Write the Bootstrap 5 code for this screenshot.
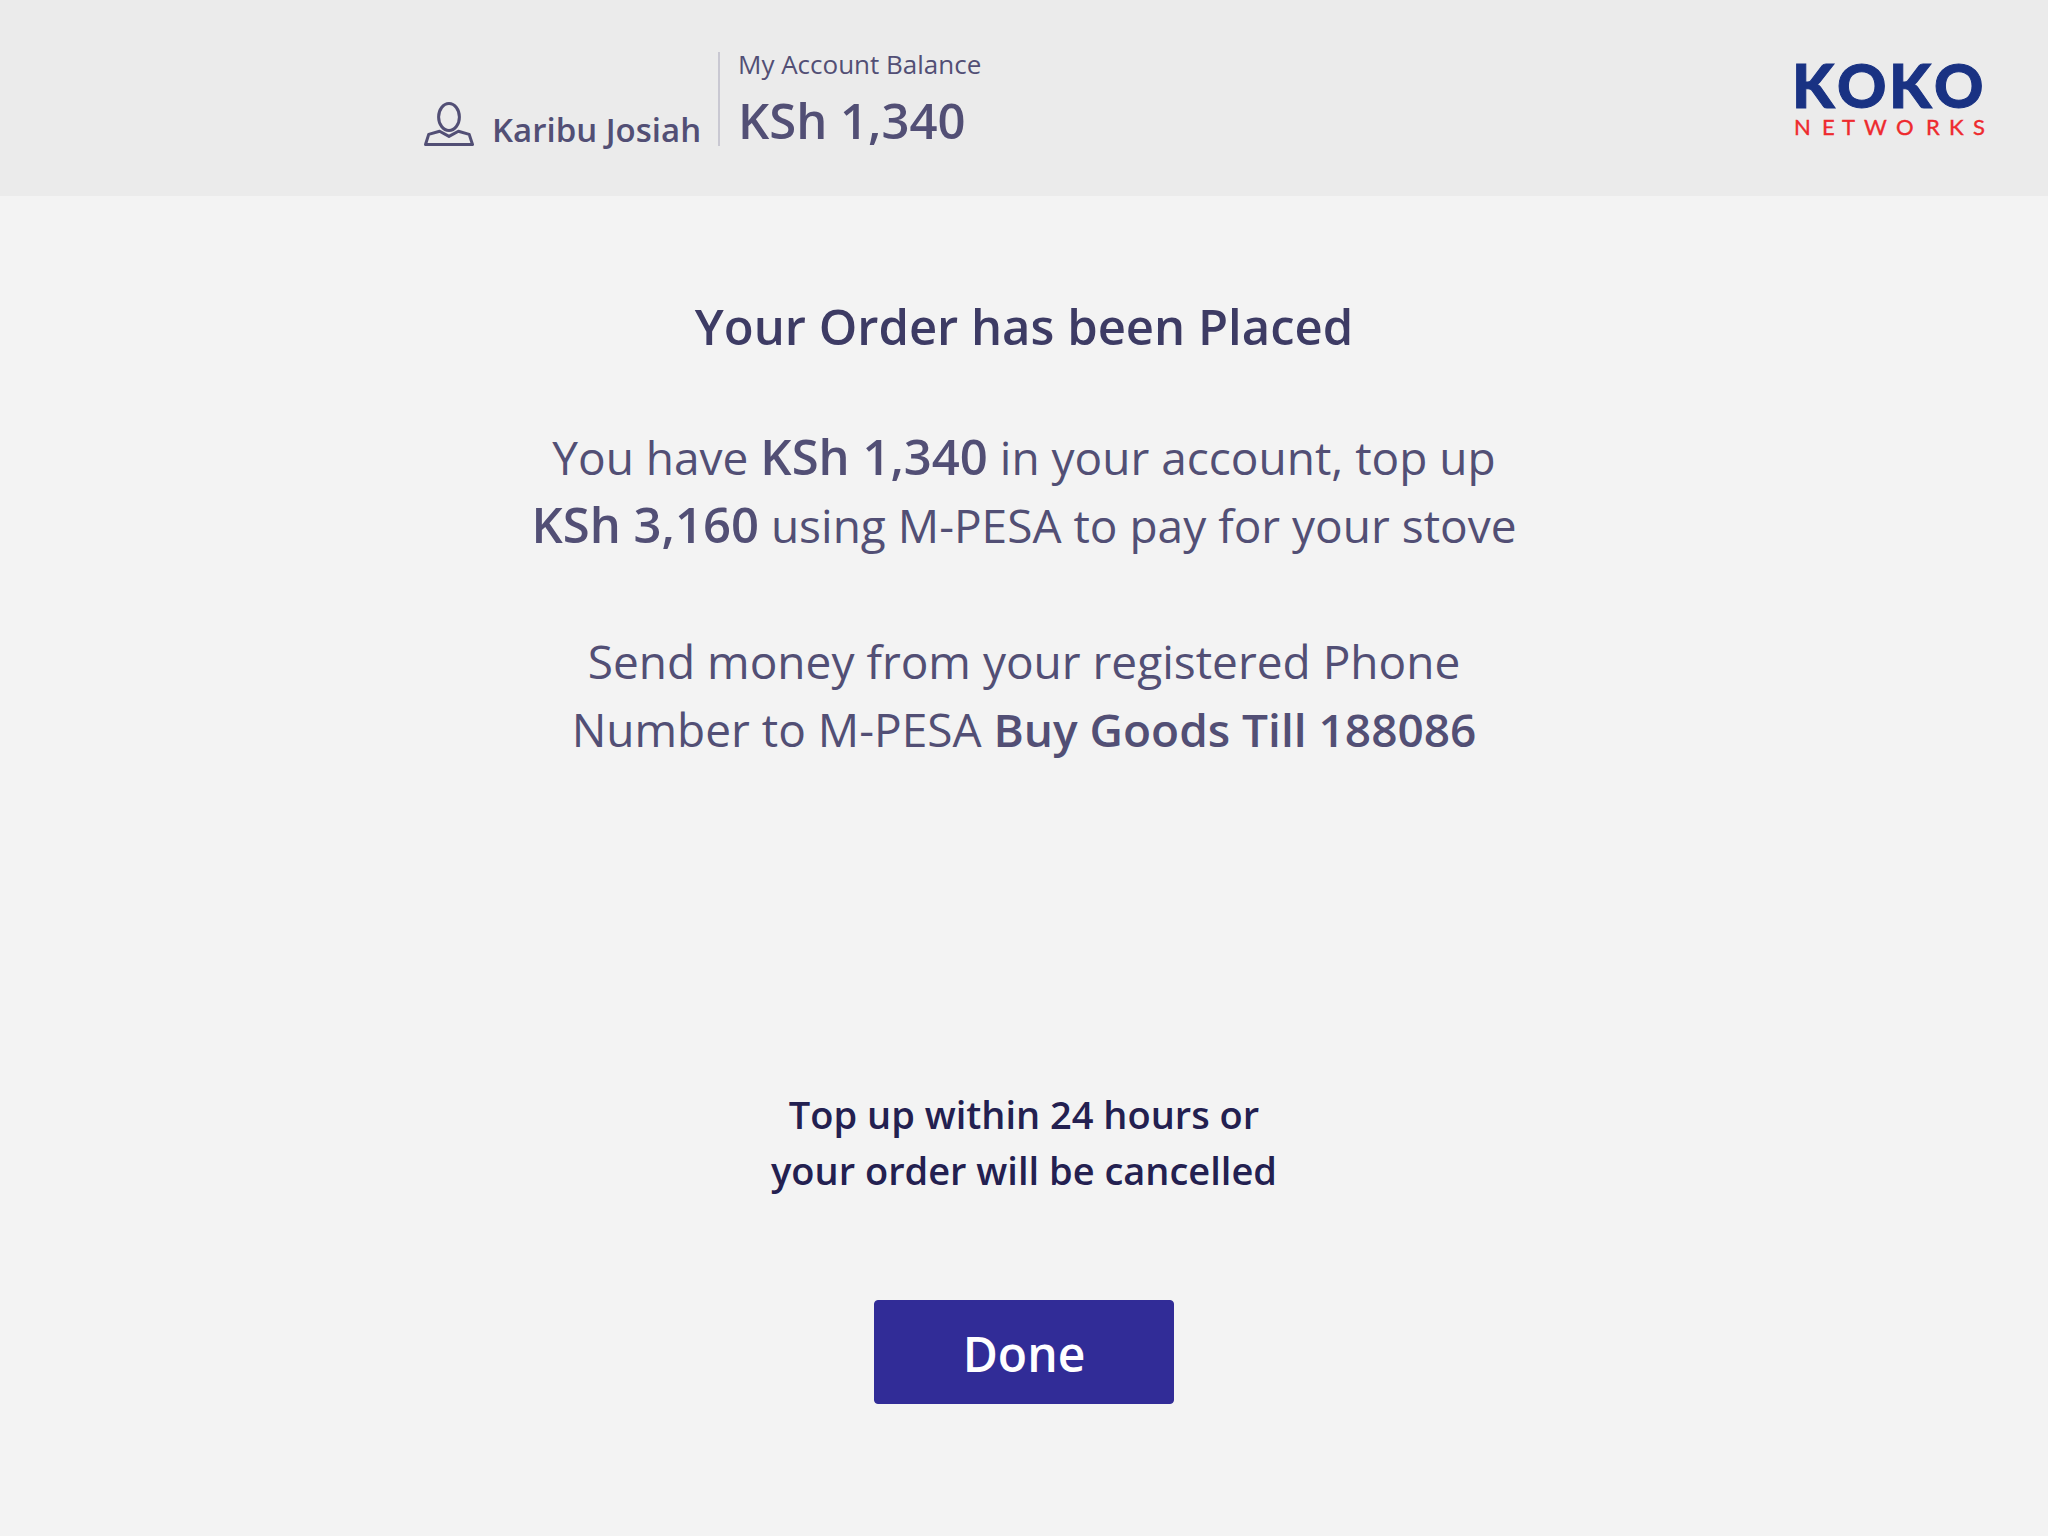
<!DOCTYPE html>
<html lang="en">
<head>
<meta charset="utf-8">
<meta name="viewport" content="width=device-width, initial-scale=1">
<title>KOKO Networks - Order placed</title>
<link href="https://cdn.jsdelivr.net/npm/bootstrap@5.3.0/dist/css/bootstrap.min.css" rel="stylesheet">
<style>
  body { font-family: "Open Sans", "Noto Sans", sans-serif; background: #f3f3f3; color: #524f75; }
  .topbar { background: #ebebeb; padding: 52px 64px 50px max(24px, calc(50% - 600px)); }
  .account-user { gap: 18px; min-width: 294px; font-size: 33px; line-height: 32px; }
  .account-balance { gap: 18px; padding-left: 18px; border-left: 2px solid #c9c8d2; }
  .balance-label { font-size: 26px; line-height: 24px; }
  .balance-amount { font-size: 49px; line-height: 52px; }
  .order-main { padding: 96px 24px 132px; }
  .order-title { font-size: 49px; line-height: 68px; color: #3d3b64; margin-bottom: 63px; }
  .order-text { font-size: 46px; line-height: 68px; margin-bottom: 68px; }
  .order-sum { font-size: 49px; line-height: 1; }
  .order-notice { font-size: 38px; line-height: 56px; color: #232050; margin-bottom: 102px; }
  .btn-done { --bs-btn-color: #fff; --bs-btn-bg: #312c97; --bs-btn-border-color: #312c97; --bs-btn-hover-color: #fff; --bs-btn-hover-bg: #29257f; --bs-btn-border-radius: 4px;
    width: 300px; font-size: 48px; line-height: 68px; padding: 19px 24px 15px; }
</style>
</head>
<body class="d-flex flex-column min-vh-100">
  <header class="topbar d-flex justify-content-between align-items-start">
    <div class="d-flex">
      <div class="account-user d-flex align-items-end fw-semibold">
        <svg width="50" height="44" viewBox="0 0 50 44" fill="none" stroke="#524f75" stroke-width="3" stroke-linejoin="round" aria-hidden="true">
          <ellipse cx="25" cy="15" rx="10.4" ry="13.4"/>
          <path d="M1.5 42.5 4.7 32.4 15.6 29.2 25 34.4 34.4 29.2 45.2 32.4 48.5 42.5Z"/>
        </svg>
        <span>Karibu Josiah</span>
      </div>
      <div class="account-balance d-flex flex-column">
        <span class="balance-label">My Account Balance</span>
        <span class="balance-amount fw-semibold">KSh 1,340</span>
      </div>
    </div>
    <svg width="196" height="94" viewBox="-6 0 196 94" overflow="visible" role="img" aria-label="KOKO Networks">
      <g font-family="Lato, sans-serif">
        <text y="56" x="-2 43 95 140" font-size="61" font-weight="900" fill="#193283" stroke="#193283">KOKO</text>
        <text y="83" x="0 28 48 70 102 132 155 179" font-size="22" fill="#ee2a2e" stroke="#ee2a2e" stroke-width="0.4">NETWORKS</text>
      </g>
    </svg>
  </header>
  <main class="order-main flex-grow-1 d-flex flex-column align-items-center text-center">
    <h1 class="order-title fw-semibold">Your Order has been Placed</h1>
    <p class="order-text">You have <strong class="order-sum fw-semibold">KSh 1,340</strong> in your account, top up<br>
      <strong class="order-sum fw-semibold">KSh 3,160</strong> using M-PESA to pay for your stove</p>
    <p class="order-text">Send money from your registered Phone<br>
      Number to M-PESA <strong class="fw-semibold">Buy Goods Till 188086</strong></p>
    <p class="order-notice fw-semibold mt-auto">Top up within 24 hours or<br>your order will be cancelled</p>
    <button type="button" class="btn btn-done fw-semibold">Done</button>
  </main>
<script src="https://cdn.jsdelivr.net/npm/bootstrap@5.3.0/dist/js/bootstrap.bundle.min.js"></script>
</body>
</html>
